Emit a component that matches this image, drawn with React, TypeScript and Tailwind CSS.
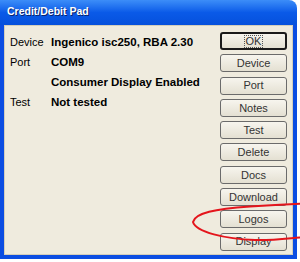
import React from 'react';

const buttons = ['OK', 'Device', 'Port', 'Notes', 'Test', 'Delete', 'Docs', 'Download', 'Logos', 'Display'];

const rows: [string, string][] = [
  ['Device', 'Ingenico isc250, RBA 2.30'],
  ['Port', 'COM9'],
  ['', 'Consumer Display Enabled'],
  ['Test', 'Not tested'],
];

export default function App() {
  return (
    <div className="relative w-[300px] h-[262px] overflow-hidden bg-white font-['Liberation_Sans',Arial,sans-serif]">
      <div className="w-[297px] h-[259px] flex flex-col">
        {/* Title bar */}
        <div className="h-[25px] shrink-0 rounded-tr-[8px] bg-gradient-to-b from-[#3C8DF8] via-[#0A5AE8] to-[#0650DC] flex items-center pl-[7px] pb-[2px]">
          <span className="text-white font-bold text-[10.5px] [text-shadow:1px_1px_0_#0A246A]">Credit/Debit Pad</span>
        </div>

        {/* Client area */}
        <div className="flex-1 flex border-x-4 border-b-4 border-[#0B4DE2] bg-[#EFEBDE]">
          <div className="flex-1 flex border border-[#D3CEBC] pt-[6px] pl-[5px] pr-[5px]">
            <div className="flex-1 grid grid-cols-[41px_1fr] auto-rows-[20px] content-start text-[11px] text-black">
              {rows.map(([label, value], i) => (
                <React.Fragment key={i}>
                  <div className="leading-[20px]">{label}</div>
                  <div className="leading-[20px] font-bold text-[11.5px] whitespace-nowrap">{value}</div>
                </React.Fragment>
              ))}
            </div>

            <div className="w-[67px] flex flex-col gap-[4.3px]">
              {buttons.map((b) => (
                <div
                  key={b}
                  className={
                    b === 'OK'
                      ? 'h-[18px] rounded-[3px] border-2 border-[#1A1A1A] bg-gradient-to-b from-[#F7F5EE] to-[#E4E0D2] flex items-center justify-center text-[11px] text-[#333]'
                      : 'h-[18px] rounded-[3px] border border-[#6B6B6B] bg-gradient-to-b from-[#F7F5EE] to-[#E4E0D2] flex items-center justify-center text-[11px] text-[#333]'
                  }
                >
                  {b === 'OK' ? (
                    <span className="border border-dotted border-[#555] px-[1px] leading-[11px]">OK</span>
                  ) : (
                    b
                  )}
                </div>
              ))}
            </div>
          </div>
        </div>
      </div>

      {/* Red annotation circle */}
      <svg className="absolute left-0 top-0 pointer-events-none" width="300" height="262" viewBox="0 0 300 262">
        <path
          d="M305 203.5 C290 204, 270 205, 250 206.5 C215 209, 195 213, 193 222 C196 232, 225 239, 255 240 C275 240.5, 290 238, 305 237"
          fill="none"
          stroke="#E4151C"
          strokeWidth="2"
        />
      </svg>
    </div>
  );
}
